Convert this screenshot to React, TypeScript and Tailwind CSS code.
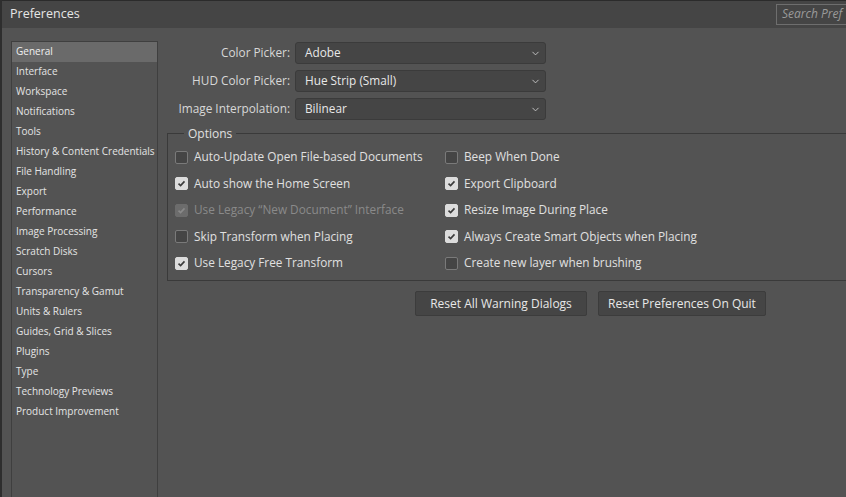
import { ChevronDown } from "lucide-react";

const sections = [
  "General",
  "Interface",
  "Workspace",
  "Notifications",
  "Tools",
  "History & Content Credentials",
  "File Handling",
  "Export",
  "Performance",
  "Image Processing",
  "Scratch Disks",
  "Cursors",
  "Transparency & Gamut",
  "Units & Rulers",
  "Guides, Grid & Slices",
  "Plugins",
  "Type",
  "Technology Previews",
  "Product Improvement",
];

const pickers = [
  { label: "Color Picker:", value: "Adobe" },
  { label: "HUD Color Picker:", value: "Hue Strip (Small)" },
  { label: "Image Interpolation:", value: "Bilinear" },
];

const leftOptions = [
  { label: "Auto-Update Open File-based Documents", checked: false },
  { label: "Auto show the Home Screen", checked: true },
  { label: "Use Legacy \u201CNew Document\u201D Interface", checked: true, disabled: true },
  { label: "Skip Transform when Placing", checked: false },
  { label: "Use Legacy Free Transform", checked: true },
];

const rightOptions = [
  { label: "Beep When Done", checked: false },
  { label: "Export Clipboard", checked: true },
  { label: "Resize Image During Place", checked: true },
  { label: "Always Create Smart Objects when Placing", checked: true },
  { label: "Create new layer when brushing", checked: false },
];

function Check({ label, checked, disabled }: { label: string; checked: boolean; disabled?: boolean }) {
  return (
    <div className="flex h-[26.5px] items-center gap-[6px]">
      <span
        className={`flex h-[13px] w-[13px] items-center justify-center rounded-[2px] border ${
          checked
            ? disabled
              ? "border-[#6c6c6c] bg-[#6c6c6c]"
              : "border-[#dcdcdc] bg-[#dcdcdc]"
            : "border-[#7a7a7a] bg-[#454545]"
        }`}
      >
        {checked && (
          <svg width="9" height="9" viewBox="0 0 9 9">
            <path
              d="M1.5 4.6 L3.6 6.6 L7.5 2.4"
              fill="none"
              stroke={disabled ? "#8a8a8a" : "#3a3a3a"}
              strokeWidth="1.6"
            />
          </svg>
        )}
      </span>
      <span className={disabled ? "text-[#8a8a8a]" : "text-[#e0e0e0]"}>{label}</span>
    </div>
  );
}

export default function App() {
  return (
    <div className="flex h-[497px] w-[846px] flex-col overflow-hidden border-l-2 border-[#2e2e2e] bg-[#535353] font-['Open_Sans',sans-serif] text-[#e0e0e0]">
      {/* Title bar */}
      <div className="flex h-[28px] shrink-0 items-center justify-between border-t border-[#2b2b2b] bg-[#454545] pl-[8px]">
        <span className="text-[12.5px] text-[#e6e6e6]">Preferences</span>
        <div className="mb-[1px] flex h-[21px] w-[70px] items-center overflow-hidden border border-r-0 border-[#6e6e6e] pl-[5px] text-[12px] italic text-[#9a9a9a]">
          <span className="whitespace-nowrap">Search Pref</span>
        </div>
      </div>

      <div className="flex min-h-0 flex-1 pt-[13px]">
        {/* Sidebar */}
        <div className="ml-[9px] w-[147px] shrink-0 border border-b-0 border-[#3f3f3f] bg-[#535353]">
          {sections.map((s, i) => (
            <div
              key={s}
              className={`flex h-[20px] items-center pb-[1px] pl-[4px] text-[10px] whitespace-nowrap ${
                i === 0 ? "bg-[#6a6a6a] text-[#f0f0f0]" : "text-[#e4e4e4]"
              }`}
            >
              {s}
            </div>
          ))}
        </div>

        {/* Main panel */}
        <div className="flex min-w-0 flex-1 flex-col pl-[9px] pt-[1px] text-[11.8px]">
          <div className="flex flex-col gap-[6px]">
            {pickers.map((p) => (
              <div key={p.label} className="flex items-center">
                <span className="w-[128px] pr-[5px] text-right text-[#d8d8d8] whitespace-nowrap">
                  {p.label}
                </span>
                <div className="flex h-[22px] w-[251px] items-center justify-between rounded-[3px] border border-[#3b3b3b] bg-[#454545] pl-[9px] pr-[4px] text-[#e8e8e8]">
                  <span>{p.value}</span>
                  <ChevronDown size={11} strokeWidth={2} className="text-[#c8c8c8]" />
                </div>
              </div>
            ))}
          </div>

          {/* Options group */}
          <div className="relative mt-[13px] h-[148px] border border-r-0 border-[#3a3a3a] pl-[7px] pt-[9px]">
            <span className="absolute -top-[9px] left-[16px] bg-[#535353] px-[4px] text-[12px] text-[#e0e0e0]">
              Options
            </span>
            <div className="flex pt-[1px]">
              <div className="w-[270px]">
                {leftOptions.map((o) => (
                  <Check key={o.label} {...o} />
                ))}
              </div>
              <div>
                {rightOptions.map((o) => (
                  <Check key={o.label} {...o} />
                ))}
              </div>
            </div>
          </div>

          <div className="mt-[10px] flex gap-[11px] pl-[248px]">
            <button className="h-[25px] w-[172px] rounded-[2px] border border-[#3c3c3c] bg-[#454545] text-[12px] text-[#e8e8e8]">
              Reset All Warning Dialogs
            </button>
            <button className="h-[25px] w-[168px] rounded-[2px] border border-[#3c3c3c] bg-[#454545] text-[12px] text-[#e8e8e8]">
              Reset Preferences On Quit
            </button>
          </div>
        </div>
      </div>
    </div>
  );
}
